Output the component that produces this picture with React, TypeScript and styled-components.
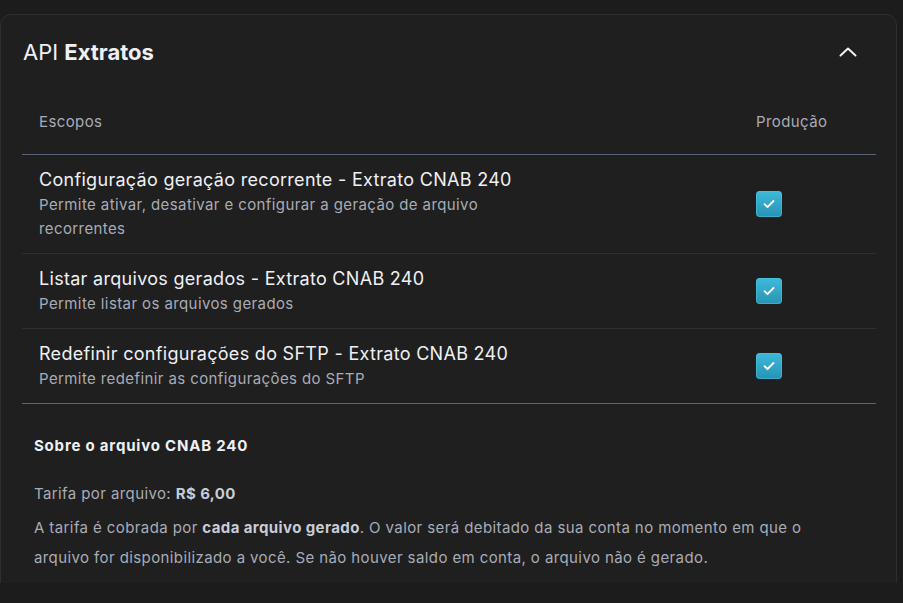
import styled, { createGlobalStyle } from 'styled-components'

const GlobalStyle = createGlobalStyle`
  html, body {
    margin: 0;
    padding: 0;
    background: #1c1c1c;
  }
  body {
    font-family: 'Inter', 'Liberation Sans', sans-serif;
  }
`

const Viewport = styled.div`
  width: 903px;
  height: 603px;
  background: #1c1c1c;
  overflow: hidden;
`

const Clip = styled.div`
  width: 897px;
  height: 583px;
  padding-top: 14px;
  box-sizing: border-box;
  overflow: hidden;
`

const Card = styled.section`
  background: #1f1f1f;
  border: 1px solid #2f2f2f;
  border-radius: 11px;
  padding: 0 20px 40px 21px;
  min-height: 620px;
  box-sizing: border-box;
  letter-spacing: 0.4px;
`

const CardHeader = styled.div`
  display: flex;
  align-items: center;
  justify-content: space-between;
  height: 73px;
  padding: 0 18px 0 1px;
`

const Title = styled.h2`
  margin: 0;
  font-size: 22px;
  font-weight: 400;
  color: #eef0f4;
  letter-spacing: 0;

  strong {
    font-weight: 700;
  }
`

const ChevronButton = styled.button`
  background: none;
  border: none;
  padding: 0;
  width: 20px;
  height: 20px;
  display: flex;
  align-items: center;
  justify-content: center;
  color: #f0f0f0;
  cursor: pointer;
`

const Table = styled.div`
  display: flex;
  flex-direction: column;
`

const HeadRow = styled.div`
  display: grid;
  grid-template-columns: 1fr 120px;
  align-items: center;
  height: 66px;
  border-bottom: 1px solid #5b6476;
  padding-left: 17px;
  font-size: 15px;
  color: #a8acb6;
`

const Row = styled.div<{ $last?: boolean }>`
  display: grid;
  grid-template-columns: 1fr 120px;
  align-items: center;
  padding: 12px 0 12px 17px;
  border-bottom: 1px solid ${(p) => (p.$last ? '#5b6476' : '#2f2f2f')};
`

const ScopeName = styled.div`
  font-size: 18px;
  color: #eef0f4;
  line-height: 26px;
  letter-spacing: 0.3px;
`

const ScopeDesc = styled.div`
  font-size: 15px;
  color: #a8acb6;
  line-height: 24px;
  max-width: 480px;
`

const Check = styled.span`
  width: 26px;
  height: 26px;
  border-radius: 4px;
  background: linear-gradient(180deg, #3fbadb 0%, #2793b4 100%);
  box-shadow: inset 0 0 0 1px rgba(80, 200, 230, 0.5);
  display: flex;
  align-items: center;
  justify-content: center;
`

const About = styled.div`
  padding: 32px 0 0 12px;
  color: #a8acb6;
  font-size: 15px;
`

const AboutTitle = styled.h3`
  margin: 0 0 24px;
  font-size: 15px;
  font-weight: 700;
  color: #eef0f4;
  letter-spacing: 0.8px;
`

const Paragraph = styled.p`
  margin: 0 0 4px;
  line-height: 30px;
  max-width: 800px;

  b {
    font-weight: 700;
    color: #c8ccd6;
  }
`

const scopes = [
  {
    name: 'Configuração geração recorrente - Extrato CNAB 240',
    desc: 'Permite ativar, desativar e configurar a geração de arquivo recorrentes',
  },
  {
    name: 'Listar arquivos gerados - Extrato CNAB 240',
    desc: 'Permite listar os arquivos gerados',
  },
  {
    name: 'Redefinir configurações do SFTP - Extrato CNAB 240',
    desc: 'Permite redefinir as configurações do SFTP',
  },
]

const CheckIcon = () => (
  <svg width="12" height="10" viewBox="0 0 12 10" fill="none">
    <path d="M1.5 5.2 L4.5 8 L10.5 2" stroke="#ffffff" strokeWidth="1.8" strokeLinecap="round" strokeLinejoin="round" />
  </svg>
)

const App = () => {
  return (
    <Viewport>
      <GlobalStyle />
      <Clip>
        <Card>
          <CardHeader>
            <Title>
              API <strong>Extratos</strong>
            </Title>
            <ChevronButton aria-label="Recolher">
              <svg width="18" height="10" viewBox="0 0 18 10" fill="none">
                <path d="M1.5 8.5 L9 1.5 L16.5 8.5" stroke="currentColor" strokeWidth="2" strokeLinecap="round" strokeLinejoin="round" />
              </svg>
            </ChevronButton>
          </CardHeader>

          <Table>
            <HeadRow>
              <span>Escopos</span>
              <span>Produção</span>
            </HeadRow>
            {scopes.map((s, i) => (
              <Row key={s.name} $last={i === scopes.length - 1}>
                <div>
                  <ScopeName>{s.name}</ScopeName>
                  <ScopeDesc>{s.desc}</ScopeDesc>
                </div>
                <Check>
                  <CheckIcon />
                </Check>
              </Row>
            ))}
          </Table>

          <About>
            <AboutTitle>Sobre o arquivo CNAB 240</AboutTitle>
            <Paragraph>
              Tarifa por arquivo: <b>R$ 6,00</b>
            </Paragraph>
            <Paragraph>
              A tarifa é cobrada por <b>cada arquivo gerado</b>. O valor será debitado da sua conta no momento em que o
              arquivo for disponibilizado a você. Se não houver saldo em conta, o arquivo não é gerado.
            </Paragraph>
          </About>
        </Card>
      </Clip>
    </Viewport>
  )
}

export default App
